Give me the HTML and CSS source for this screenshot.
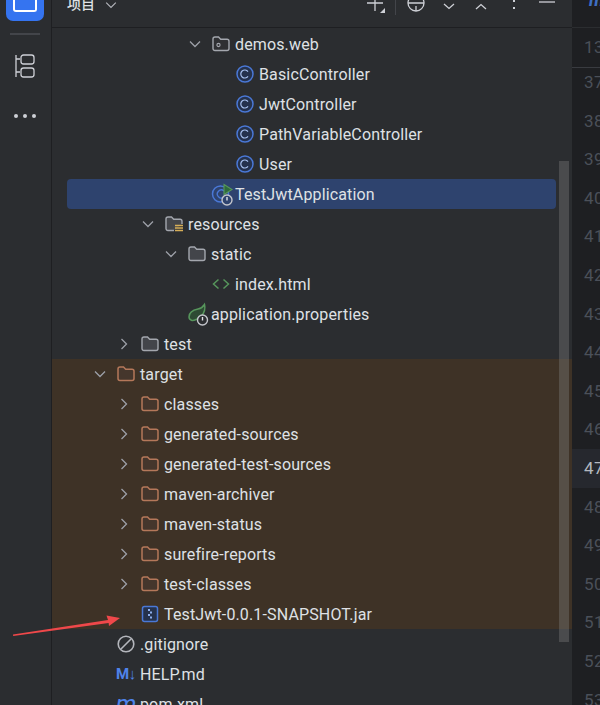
FILE: index.html
```html
<!DOCTYPE html>
<html lang="zh">
<head>
<meta charset="utf-8">
<title>项目</title>
<link rel="stylesheet" href="styles.css">
</head>
<body>
<svg class="defs" width="0" height="0">
  <symbol id="chev-d" viewBox="0 0 16 16"><path d="M3 5.500l5 5 5-5" fill="none" stroke="#9da0a8" stroke-width="1.300"/></symbol>
  <symbol id="chev-r" viewBox="0 0 16 16"><path d="M5.500 3l5 5-5 5" fill="none" stroke="#9da0a8" stroke-width="1.300"/></symbol>
  <symbol id="folder" viewBox="0 0 18 18"><path d="M1 4a2 2 0 0 1 2-2h3.500l2.200 2.200h6.300a2 2 0 0 1 2 2v7.300a2 2 0 0 1-2 2H3a2 2 0 0 1-2-2z" fill="#43454a" stroke="#a4a7ae" stroke-width="1.400"/></symbol>
  <symbol id="folder-t" viewBox="0 0 18 18"><path d="M1 4a2 2 0 0 1 2-2h3.500l2.200 2.200h6.300a2 2 0 0 1 2 2v7.300a2 2 0 0 1-2 2H3a2 2 0 0 1-2-2z" fill="#45362c" stroke="#b5785a" stroke-width="1.500"/></symbol>
  <symbol id="folder-p" viewBox="0 0 18 18"><path d="M1 4a2 2 0 0 1 2-2h3.500l2.200 2.200h6.300a2 2 0 0 1 2 2v7.300a2 2 0 0 1-2 2H3a2 2 0 0 1-2-2z" fill="#2f3033" stroke="#a4a7ae" stroke-width="1.400"/><circle cx="6.500" cy="10" r="1.600" fill="none" stroke="#a4a7ae" stroke-width="1.100"/></symbol>
  <symbol id="folder-r" viewBox="0 0 18 18"><path d="M9 15.500H3a2 2 0 0 1-2-2V4a2 2 0 0 1 2-2h3.500l2.200 2.200h6.300a2 2 0 0 1 2 2V9" fill="#43454a" stroke="#a4a7ae" stroke-width="1.400"/><path d="M10 10.500h8M10 13h8M10 15.500h8" stroke="#d6ae58" stroke-width="1.500"/></symbol>
  <symbol id="cls" viewBox="0 0 18 18"><circle cx="9" cy="9" r="8" fill="#25324d" stroke="#4a78d6" stroke-width="1.500"/><path d="M12 6.600a4 4 0 1 0 0 4.800" fill="none" stroke="#a9c2f0" stroke-width="1.200"/></symbol>
  <symbol id="run" viewBox="0 0 24 24"><circle cx="9.500" cy="12" r="8" fill="none" stroke="#4a78d6" stroke-width="1.500"/><path d="M13 9a4 4 0 1 0 0 6" fill="none" stroke="#4a78d6" stroke-width="1.300"/><path d="M13 2.500l8 5-8 5z" fill="#2f6b3c" stroke="#57965c" stroke-width="1.100"/><circle cx="16" cy="18" r="5" fill="#2e436e" stroke="#c4c6cc" stroke-width="1.400"/><path d="M16 15v3.500" stroke="#e0e1e5" stroke-width="1.400"/></symbol>
  <symbol id="html" viewBox="0 0 18 18"><path d="M6.500 4.500L1.500 9l5 4.500M11.500 4.500l5 4.500-5 4.500" fill="none" stroke="#57965c" stroke-width="1.500"/></symbol>
  <symbol id="leaf" viewBox="0 0 24 24"><path d="M2 15c0-5 4-7 9-8 2.500-.5 5-2 6.500-4.500 1 4-.5 8.500-3 11.500-3 3-8 5-10 4.300-1.500-.6-2.500-1.800-2.500-3.300z" fill="#2d4a33" stroke="#57965c" stroke-width="1.500"/><circle cx="15.500" cy="18" r="5" fill="#2b2d30" stroke="#c4c6cc" stroke-width="1.400"/><path d="M15.500 15v3.500" stroke="#e0e1e5" stroke-width="1.400"/></symbol>
  <symbol id="jar" viewBox="0 0 18 18"><rect x="1.500" y="1.500" width="15" height="15" rx="2" fill="#25324d" stroke="#4a78d6" stroke-width="1.500"/><path d="M7 4h2v2H7zM9 6.500h2v2H9zM7 9h2v2H7zM9 11.500h2v2H9z" fill="#8fb0ee"/></symbol>
  <symbol id="ignore" viewBox="0 0 18 18"><circle cx="9" cy="9" r="7.800" fill="none" stroke="#b4b6bc" stroke-width="1.600"/><path d="M4 14L14 4" stroke="#b4b6bc" stroke-width="1.600"/></symbol>
</svg>

<div class="app">
  <nav class="rail">
    <div class="rail-active"><span class="rail-square"></span></div>
    <div class="rail-sep"></div>
    <svg class="rail-icon" width="20" height="24" viewBox="0 0 20 24"><path d="M1 1v22M1 5h4M1 18h4" fill="none" stroke="#ced0d6" stroke-width="1.300"/><rect x="6" y="1" width="13" height="9" rx="2.500" fill="none" stroke="#ced0d6" stroke-width="1.300"/><rect x="6" y="14" width="13" height="9" rx="2.500" fill="none" stroke="#ced0d6" stroke-width="1.300"/></svg>
    <div class="rail-dots"><i></i><i></i><i></i></div>
  </nav>

  <section class="panel">
    <header class="head">
      <span class="head-title">项目</span>
      <svg class="head-chev" width="14" height="14" viewBox="0 0 16 16"><path d="M2.500 3l5.500 5.500L13.500 3" fill="none" stroke="#b4b6bc" stroke-width="1.300"/></svg>
      <div class="head-tools">
        <svg class="t-plus" width="20" height="14" viewBox="0 0 20 14"><path d="M9 0v11M1 3h16" stroke="#ced0d6" stroke-width="1.300"/><path d="M19 8v5h-5z" fill="#ced0d6"/></svg>
        <span class="t-sep"></span>
        <svg class="t-target" width="20" height="14" viewBox="0 0 20 14"><circle cx="10" cy="3" r="8" fill="none" stroke="#ced0d6" stroke-width="1.300"/><path d="M10 6v5M2 3h16" stroke="#ced0d6" stroke-width="1.300"/></svg>
        <svg class="t-down" width="14" height="14" viewBox="0 0 14 14"><path d="M2 4l5 4.500L12 4" fill="none" stroke="#ced0d6" stroke-width="1.300"/></svg>
        <svg class="t-up" width="14" height="14" viewBox="0 0 14 14"><path d="M2 9l5-4.500L12 9" fill="none" stroke="#ced0d6" stroke-width="1.300"/></svg>
        <svg class="t-dots" width="6" height="14" viewBox="0 0 6 14"><path d="M2 0h2v2H2zM2 7h2v2H2z" fill="#ced0d6"/></svg>
        <svg class="t-min" width="16" height="14" viewBox="0 0 16 14"><path d="M0 2h16" stroke="#ced0d6" stroke-width="1.300"/></svg>
      </div>
    </header>

    <div class="tree">
      <div class="row l4"><svg class="chev"><use href="#chev-d"/></svg><svg class="ico"><use href="#folder-p"/></svg><span class="name">demos.web</span></div>
      <div class="row l5"><span class="nochev"></span><svg class="ico"><use href="#cls"/></svg><span class="name">BasicController</span></div>
      <div class="row l5"><span class="nochev"></span><svg class="ico"><use href="#cls"/></svg><span class="name">JwtController</span></div>
      <div class="row l5"><span class="nochev"></span><svg class="ico"><use href="#cls"/></svg><span class="name">PathVariableController</span></div>
      <div class="row l5"><span class="nochev"></span><svg class="ico"><use href="#cls"/></svg><span class="name">User</span></div>
      <div class="row l4 selected"><span class="nochev"></span><svg class="ico ico-big"><use href="#run"/></svg><span class="name">TestJwtApplication</span></div>
      <div class="row l2"><svg class="chev"><use href="#chev-d"/></svg><svg class="ico"><use href="#folder-r"/></svg><span class="name">resources</span></div>
      <div class="row l3"><svg class="chev"><use href="#chev-d"/></svg><svg class="ico"><use href="#folder"/></svg><span class="name">static</span></div>
      <div class="row l4"><span class="nochev"></span><svg class="ico"><use href="#html"/></svg><span class="name">index.html</span></div>
      <div class="row l3"><span class="nochev"></span><svg class="ico ico-big"><use href="#leaf"/></svg><span class="name">application.properties</span></div>
      <div class="row l1"><svg class="chev"><use href="#chev-r"/></svg><svg class="ico"><use href="#folder"/></svg><span class="name">test</span></div>
      <div class="excluded">
        <div class="row l0"><svg class="chev"><use href="#chev-d"/></svg><svg class="ico"><use href="#folder-t"/></svg><span class="name">target</span></div>
        <div class="row l1"><svg class="chev"><use href="#chev-r"/></svg><svg class="ico"><use href="#folder-t"/></svg><span class="name">classes</span></div>
        <div class="row l1"><svg class="chev"><use href="#chev-r"/></svg><svg class="ico"><use href="#folder-t"/></svg><span class="name">generated-sources</span></div>
        <div class="row l1"><svg class="chev"><use href="#chev-r"/></svg><svg class="ico"><use href="#folder-t"/></svg><span class="name">generated-test-sources</span></div>
        <div class="row l1"><svg class="chev"><use href="#chev-r"/></svg><svg class="ico"><use href="#folder-t"/></svg><span class="name">maven-archiver</span></div>
        <div class="row l1"><svg class="chev"><use href="#chev-r"/></svg><svg class="ico"><use href="#folder-t"/></svg><span class="name">maven-status</span></div>
        <div class="row l1"><svg class="chev"><use href="#chev-r"/></svg><svg class="ico"><use href="#folder-t"/></svg><span class="name">surefire-reports</span></div>
        <div class="row l1"><svg class="chev"><use href="#chev-r"/></svg><svg class="ico"><use href="#folder-t"/></svg><span class="name">test-classes</span></div>
        <div class="row l1"><span class="nochev"></span><svg class="ico"><use href="#jar"/></svg><span class="name">TestJwt-0.0.1-SNAPSHOT.jar</span></div>
      </div>
      <div class="row l0"><span class="nochev"></span><svg class="ico"><use href="#ignore"/></svg><span class="name">.gitignore</span></div>
      <div class="row l0"><span class="nochev"></span><span class="md">M↓</span><span class="name">HELP.md</span></div>
      <div class="row l0"><span class="nochev"></span><span class="pom">m</span><span class="name">pom.xml</span></div>
    </div>
    <div class="scrollbar"></div>
  </section>

  <aside class="gutter">
    <div class="tabbar"><span class="tab-m">m</span></div>
    <div class="sticky">13</div>
    <div class="lines">
      <div>37</div><div>38</div><div>39</div><div>40</div><div>41</div><div>42</div><div>43</div><div>44</div><div>45</div><div>46</div>
      <div class="current">47</div>
      <div>48</div><div>49</div><div>50</div><div>51</div><div>52</div><div>53</div>
    </div>
  </aside>
</div>

<svg class="arrow" width="120" height="30" viewBox="0 0 120 30"><path d="M13 24.500L108 10 106.500 5.500 120 8l-11 8-.4-3L13.200 26z" fill="#f0484a"/></svg>
</body>
</html>
```

FILE: styles.css
```css
* { box-sizing: border-box; }
html, body { margin: 0; padding: 0; height: 100%; overflow: hidden; background: #2b2d30; }
body { font-family: Roboto, "Noto Sans CJK SC", sans-serif; color: #dfe1e5; }
.defs { position: absolute; }

.app { display: grid; grid-template-columns: 52px 520px 28px; height: 705px; overflow: hidden; }

/* left tool rail */
.rail { border-right: 1px solid #1e1f22; display: flex; flex-direction: column; align-items: center; background: #2b2d30; padding-right: 1px; }
.rail-active { width: 38px; height: 21px; background: #3574f0; border-radius: 0 0 7px 7px; display: flex; justify-content: center; }
.rail-square { width: 24px; height: 12px; border: 2px solid #fff; border-top: 0; border-radius: 0 0 3px 3px; }
.rail-sep { width: 30px; height: 2px; background: #43454a; margin-top: 12px; }
.rail-icon { margin-top: 19px; }
.rail-dots { display: flex; gap: 5px; margin-top: 36px; }
.rail-dots i { width: 4px; height: 4px; border-radius: 50%; background: #ced0d6; }

/* project panel */
.panel { position: relative; background: #2b2d30; min-width: 0; }
.head { height: 28px; border-bottom: 1px solid #1e1f22; display: flex; align-items: flex-start; overflow: hidden; padding-left: 15px; }
.head-title { font-size: 14px; line-height: 20px; margin-top: -6px; font-weight: 500; color: #dfe1e5; }
.head-chev { margin-left: 9px; }
.head-tools { margin-left: auto; margin-right: 17px; display: flex; align-items: flex-start; }
.t-sep { width: 1px; height: 15px; background: #43454a; margin: 0 10px 0 9px; }
.t-down { margin-left: 16px; }
.t-up { margin-left: 18px; }
.t-dots { margin-left: 23px; }
.t-min { margin-left: 22px; }

.tree { padding-top: 1px; }
.row { height: 30px; display: flex; align-items: center; font-size: 16px; white-space: nowrap; }
.name { padding-top: 1px; line-height: 29px; letter-spacing: .14px; }
.chev { width: 16px; height: 16px; margin-right: 8px; flex: none; }
.nochev { width: 24px; flex: none; }
.ico { width: 18px; height: 18px; margin: 0 5px 0 1px; flex: none; }
.ico-big { width: 24px; height: 24px; margin: 0; }
.l0 { padding-left: 40px; }
.l1 { padding-left: 64px; }
.l2 { padding-left: 88px; }
.l3 { padding-left: 111px; }
.l4 { padding-left: 135px; }
.l5 { padding-left: 159px; }
.selected { background: #2e436e; border-radius: 4px; margin: 0 16px 0 15px; padding-left: 120px; }
.excluded { background: #3e3226; }
.md { width: 24px; font: 700 15px/30px Roboto, sans-serif; color: #4f83ea; flex: none; letter-spacing: -.5px; }
.pom { width: 24px; font: italic 400 24px/24px Roboto, sans-serif; color: #4f83ea; flex: none; }
.scrollbar { position: absolute; left: 507px; top: 161px; width: 10px; height: 481px; background: rgba(125, 125, 125, .38); }

/* editor gutter */
.gutter { background: #1e1f22; font: 17px/1 Roboto, sans-serif; color: #4b5059; overflow: hidden; letter-spacing: .5px; }
.tabbar { height: 28px; border-bottom: 1px solid #2b2d30; overflow: hidden; }
.tab-m { display: block; font: italic 700 18px/18px Roboto, sans-serif; color: #3f6fc4; margin: -9px 0 0 17px; }
.sticky { height: 40px; line-height: 38px; padding-left: 12px; border-bottom: 1px solid #393b40; position: relative; z-index: 1; background: #1e1f22; }
.lines { margin-top: -5px; }
.lines div { height: 38.6px; line-height: 38.6px; padding-left: 12px; }
.lines .current { background: #26282e; color: #b4b8bf; }

.arrow { position: absolute; left: 0; top: 610px; }
```
